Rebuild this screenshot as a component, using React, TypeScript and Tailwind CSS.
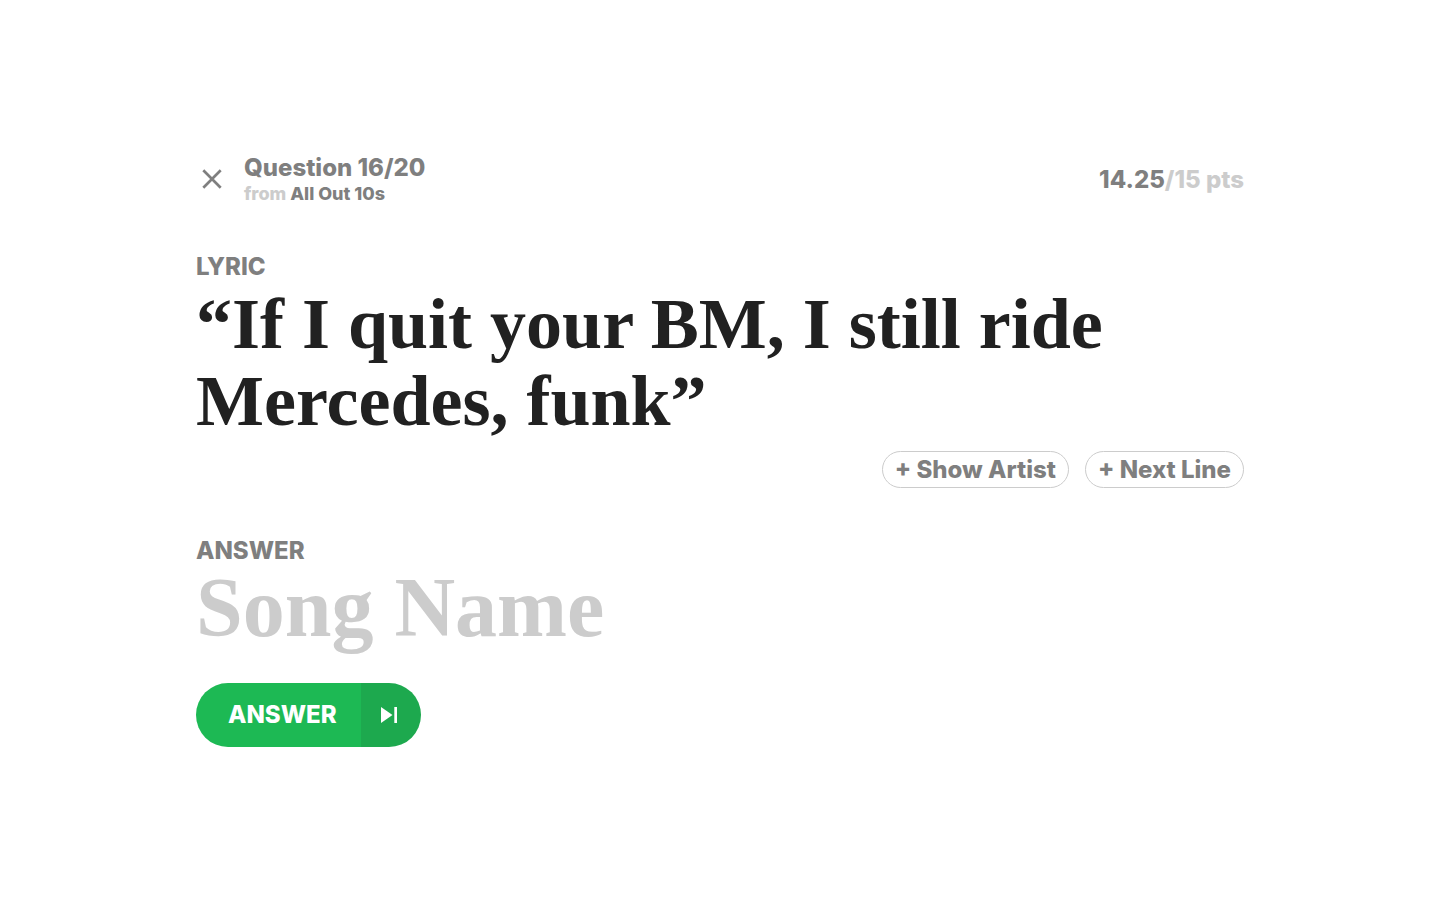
export default function App() {
  return (
    <main className="flex min-h-screen items-center bg-white font-['Inter',sans-serif] font-extrabold text-[#7f7f7f]">
      <div className="mx-auto w-full max-w-[1080px] px-4">
        <header className="flex items-center justify-between">
          <div className="flex items-center gap-4">
            <button type="button" aria-label="Close" className="flex size-8 items-center justify-center">
              <svg className="size-8" viewBox="0 0 32 32" fill="none" stroke="currentColor" strokeWidth="2.7" aria-hidden="true">
                <path d="M7.3 6.3 24.7 23.7M24.7 6.3 7.3 23.7" />
              </svg>
            </button>
            <div>
              <h1 className="text-2xl leading-7">Question 16/20</h1>
              <p className="text-lg leading-6 text-[#cccccc]">
                from <span className="text-[#7f7f7f]">All Out 10s</span>
              </p>
            </div>
          </div>
          <p className="text-2xl leading-7">
            14.25<span className="text-[#cccccc]">/15 pts</span>
          </p>
        </header>

        <section className="mt-12">
          <h2 className="text-2xl leading-[26px]">LYRIC</h2>
          <p className="mt-1.5 font-['Liberation_Serif',serif] text-[72px] leading-[77px] font-bold text-[#212121]">
            “If I quit your BM, I still ride Mercedes, funk”
          </p>
          <div className="mt-[11px] flex flex-wrap justify-end gap-4">
            <button type="button" className="rounded-full border border-[#cccccc] px-3 text-2xl leading-[35px]">+ Show Artist</button>
            <button type="button" className="rounded-full border border-[#cccccc] px-3 text-2xl leading-[35px]">+ Next Line</button>
          </div>
        </section>

        <form className="mt-12" onSubmit={(event) => event.preventDefault()}>
          <label htmlFor="song" className="block text-2xl leading-[30px]">ANSWER</label>
          <input
            id="song"
            type="text"
            placeholder="Song Name"
            className="-mt-1.5 block h-24 w-full bg-transparent font-['Liberation_Serif',serif] text-[84px] leading-[96px] font-bold text-[#212121] outline-none placeholder:text-[#cccccc]"
          />
          <div className="mt-[27px] flex h-16 w-fit overflow-hidden rounded-full text-white">
            <button type="submit" className="bg-[#1db954] pr-6 pl-8 text-2xl">ANSWER</button>
            <button type="button" aria-label="Skip" className="flex w-[60px] items-center bg-[#1da94e] pl-4">
              <svg className="size-6" viewBox="0 0 24 24" fill="currentColor" aria-hidden="true">
                <path d="M4 4v16l11.5-8zM17.3 4h2.7v16h-2.7z" />
              </svg>
            </button>
          </div>
        </form>
      </div>
    </main>
  );
}
